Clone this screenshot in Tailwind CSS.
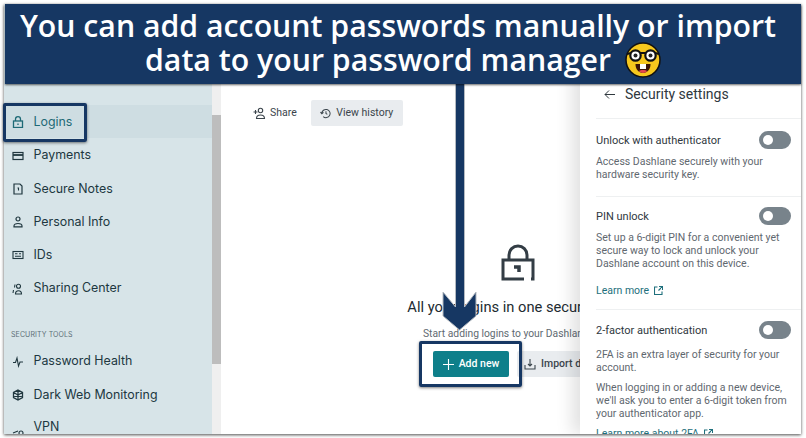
<!DOCTYPE html>
<html lang="en">
<head>
    <meta charset="UTF-8">
    <title>Dashlane add logins</title>
    <script src="https://cdn.jsdelivr.net/npm/@tailwindcss/browser@4"></script>
</head>
<body class="bg-white overflow-hidden">
<div class="relative w-[806px] h-[438px] overflow-hidden">
    <!-- App screenshot -->
    <div class="absolute left-[4px] top-[4px] w-[797px] h-[430px] flex overflow-hidden shadow-[0_1px_3px_rgba(0,0,0,0.7)] font-['Roboto',sans-serif]">
        <!-- Sidebar -->
        <div class="w-[208px] shrink-0 bg-[#d7e4e8] text-[#20373f] text-[12.400px] font-['Inter',sans-serif] pt-[101px]">
            <div class="h-[33.200px] mb-[1px] pt-[1px] flex items-center gap-[9.500px] pl-[8px] bg-[#cedde2] text-[#1e6a76]">
                <svg class="w-[12px] h-[12px]" viewBox="0 0 12 12" fill="none" stroke="currentColor" stroke-width="1.300"><rect x="1.500" y="5" width="9" height="6.500"/><path d="M3.500 5V3.200a2.500 2.500 0 0 1 5 0V5M6 7.500v1.500"/></svg>
                <span>Logins</span>
            </div>
            <div class="h-[33.200px] flex items-center gap-[9.500px] pl-[8px]">
                <svg class="w-[12px] h-[12px]" viewBox="0 0 12 12" fill="none" stroke="currentColor" stroke-width="1.200"><rect x="1" y="2.500" width="10" height="7"/><path d="M1 5h10" stroke-width="1.800"/></svg>
                <span>Payments</span>
            </div>
            <div class="h-[33.200px] flex items-center gap-[9.500px] pl-[8px]">
                <svg class="w-[12px] h-[12px]" viewBox="0 0 12 12" fill="none" stroke="currentColor" stroke-width="1.200"><path d="M2 1h6l2 2v8H2z"/><path d="M5.500 5h1v2.500" stroke-width="1.100"/></svg>
                <span>Secure Notes</span>
            </div>
            <div class="h-[33.200px] flex items-center gap-[9.500px] pl-[8px]">
                <svg class="w-[12px] h-[12px]" viewBox="0 0 12 12" fill="none" stroke="currentColor" stroke-width="1.200"><circle cx="6" cy="3" r="2"/><path d="M2 10.800V10c0-1.500 1.500-2.500 4-2.500s4 1 4 2.500v.8z"/></svg>
                <span>Personal Info</span>
            </div>
            <div class="h-[33.200px] flex items-center gap-[9.500px] pl-[8px]">
                <svg class="w-[12px] h-[12px]" viewBox="0 0 12 12" fill="none" stroke="currentColor" stroke-width="1.100"><rect x="1" y="2.500" width="10" height="7"/><path d="M3 4.800h2.500M3 7.200h6M7 4.800h2"/></svg>
                <span>IDs</span>
            </div>
            <div class="h-[33.200px] flex items-center gap-[9.500px] pl-[8px]">
                <svg class="w-[12px] h-[12px]" viewBox="0 0 12 12" fill="none" stroke="currentColor" stroke-width="1.100"><circle cx="6.500" cy="3.200" r="2"/><path d="M3.500 11c0-2 1-3.200 3-3.200s3 1.200 3 3.200zM3 1.500l-.5 3M1.500 7L1 10"/></svg>
                <span>Sharing Center</span>
            </div>
            <div class="mt-[20px] h-[20px] pl-[7px] flex items-center text-[7px] tracking-[0.1px] text-[#5c6f76]">SECURITY TOOLS</div>
            <div class="h-[33.200px] flex items-center gap-[9.500px] pl-[8px]">
                <svg class="w-[12px] h-[12px]" viewBox="0 0 12 12" fill="none" stroke="currentColor" stroke-width="1.100"><path d="M1 6.500h2.500L5 2l1.500 8L8 6h3"/></svg>
                <span>Password Health</span>
            </div>
            <div class="h-[33.200px] flex items-center gap-[9.500px] pl-[8px]">
                <svg class="w-[12px] h-[12px]" viewBox="0 0 12 12" fill="none" stroke="currentColor" stroke-width="1.300"><path d="M6 1l4.500 2.500v5L6 11 1.500 8.500v-5zM6 1v10M1.500 3.500l9 5M10.500 3.500l-9 5"/></svg>
                <span>Dark Web Monitoring</span>
            </div>
            <div class="h-[33.200px] flex items-center gap-[9.500px] pl-[8px]">
                <svg class="w-[12px] h-[12px] mt-[9px]" viewBox="0 0 12 12" fill="none" stroke="currentColor" stroke-width="1.100"><path d="M1 6l5-2M1 9l4-1.500"/><circle cx="9" cy="6" r="2"/></svg>
                <span class="-mt-[2px]">VPN</span>
            </div>
        </div>
        <!-- Scrollbar -->
        <div class="w-[9px] shrink-0 bg-[#efefef] pt-[111px]">
            <div class="h-[249px] bg-[#bdbdbd]"></div>
        </div>
        <!-- Main -->
        <div class="w-[594px] shrink-0 bg-white text-[#3b454c]">
            <div class="pt-[96px] pl-[32px] flex items-center gap-[14px] text-[10.500px]">
                <div class="flex items-center gap-[4px]">
                    <svg class="w-[13px] h-[13px]" viewBox="0 0 13 13" fill="none" stroke="currentColor" stroke-width="1.100"><circle cx="7.500" cy="3.500" r="2.200"/><path d="M3.500 11.500c0-2 1.500-3.500 4-3.500s4 1.500 4 3.500zM0.500 5h4M2.500 3v4"/></svg>
                    <span>Share</span>
                </div>
                <div class="h-[26px] w-[92px] rounded-[2px] bg-[#e9ecef] flex items-center justify-center gap-[5px]">
                    <svg class="w-[11px] h-[11px]" viewBox="0 0 12 12" fill="none" stroke="currentColor" stroke-width="1.100"><path d="M2 6a4.500 4.500 0 1 1 1.500 3.400M0.500 4.500L2 6.200l1.800-1.500M6.500 3.500V6l1.500 1"/></svg>
                    <span>View history</span>
                </div>
            </div>
            <div class="mt-[118px] flex flex-col items-center">
                <svg class="w-[36px] h-[37px]" viewBox="0 0 36 37" fill="none" stroke="#333d45" stroke-width="3"><path d="M9 16V11a9 9 0 0 1 18 0v5"/><path d="M24 35H3V16h30v19h-2"/><path d="M14 23h5v5" stroke-width="3.500"/></svg>
                <div class="mt-[16px] text-[14.700px] leading-[20px] text-[#222b31] whitespace-nowrap">All your logins in one secure place</div>
                <div class="mt-[9px] text-[10.300px] leading-[16px] text-[#616a71] whitespace-nowrap">Start adding logins to your Dashlane vault</div>
                <div class="mt-[9px] flex gap-[8px] text-[10.500px] font-medium">
                    <div class="w-[76px] h-[26px] rounded-[2px] bg-[#0e7f8a] text-white flex items-center justify-center gap-[5px]">
                        <svg class="w-[11px] h-[11px]" viewBox="0 0 11 11" fill="none" stroke="currentColor" stroke-width="1.100"><path d="M5.500 0v11M0 5.500h11"/></svg>
                        <span>Add new</span>
                    </div>
                    <div class="w-[86px] h-[26px] rounded-[2px] bg-[#e9ecef] flex items-center justify-center gap-[5px]">
                        <svg class="w-[12px] h-[12px]" viewBox="0 0 12 12" fill="none" stroke="currentColor" stroke-width="1.100"><path d="M1 7v4h10V7M6 1v7M4 6l2 2 2-2"/></svg>
                        <span>Import data</span>
                    </div>
                </div>
            </div>
        </div>
        <!-- Security settings drawer -->
        <div class="absolute right-0 top-0 bottom-0 w-[221px] bg-white shadow-[-8px_0_16px_rgba(0,0,0,0.12)] pt-[80px] text-[#5f686f] text-[10.500px] leading-[13px]">
            <div class="h-[35px] pb-[14px] ml-[16px] border-b border-[#eef0f1] flex items-center gap-[10px] text-[#2f383e] text-[14px]">
                <svg class="w-[11px] h-[11px] ml-[8px]" viewBox="0 0 11 11" fill="none" stroke="currentColor" stroke-width="1"><path d="M11 5.500H1M5 1.500l-4 4 4 4"/></svg>
                <span>Security settings</span>
            </div>
            <div class="h-[78px] ml-[16px] border-b border-[#eef0f1] pt-[12px] pr-[10px]">
                <div class="flex items-center justify-between h-[18px] text-[#2f383e] text-[11px]">
                    <span>Unlock with authenticator</span>
                    <div class="w-[32px] h-[18px] rounded-full bg-[#78838b] p-[4px]"><div class="w-[10px] h-[10px] rounded-full bg-white"></div></div>
                </div>
                <p class="mt-[6px]">Access Dashlane securely with your<br>hardware security key.</p>
            </div>
            <div class="h-[113px] ml-[16px] border-b border-[#eef0f1] pt-[10px] pr-[10px]">
                <div class="flex items-center justify-between h-[18px] text-[#2f383e] text-[11px]">
                    <span>PIN unlock</span>
                    <div class="w-[32px] h-[18px] rounded-full bg-[#78838b] p-[4px]"><div class="w-[10px] h-[10px] rounded-full bg-white"></div></div>
                </div>
                <p class="mt-[6px]">Set up a 6-digit PIN for a convenient yet<br>secure way to lock and unlock your<br>Dashlane account on this device.</p>
                <div class="mt-[14px] flex items-center gap-[5px] text-[#1e6f7c]">
                    <span>Learn more</span>
                    <svg class="w-[9px] h-[9px]" viewBox="0 0 9 9" fill="none" stroke="currentColor" stroke-width="1.100"><path d="M3.500 1H.5v7.500H8V5.500M5 .5h3.500V4M8.500.5L4.500 4.500"/></svg>
                </div>
            </div>
            <div class="ml-[16px] pt-[11px] pr-[10px]">
                <div class="flex items-center justify-between h-[18px] text-[#2f383e] text-[11px]">
                    <span>2-factor authentication</span>
                    <div class="w-[32px] h-[18px] rounded-full bg-[#78838b] p-[4px]"><div class="w-[10px] h-[10px] rounded-full bg-white"></div></div>
                </div>
                <p class="mt-[9px]">2FA is an extra layer of security for your<br>account.</p>
                <p class="mt-[7px]">When logging in or adding a new device,<br>we'll ask you to enter a 6-digit token from<br>your authenticator app.</p>
                <div class="mt-[7px] flex items-center gap-[5px] text-[#1e6f7c]">
                    <span class="underline">Learn more about 2FA</span>
                    <svg class="w-[9px] h-[9px]" viewBox="0 0 9 9" fill="none" stroke="currentColor" stroke-width="1.100"><path d="M3.500 1H.5v7.500H8V5.500M5 .5h3.500V4M8.500.5L4.500 4.500"/></svg>
                </div>
            </div>
        </div>
    </div>

    <!-- Highlight boxes -->
    <div class="absolute left-[3px] top-[103px] w-[84px] h-[39px] border-[3px] border-[#163763] rounded-[2px] shadow-[0_1px_3px_rgba(0,0,0,0.5)]"></div>
    <div class="absolute left-[419px] top-[341px] w-[103px] h-[46px] border-[3px] border-[#163763] rounded-[2px] shadow-[0_1px_3px_rgba(0,0,0,0.5)]"></div>

    <!-- Arrow -->
    <svg class="absolute left-[440px] top-[80px]" width="40" height="254" viewBox="0 0 40 254">
        <path d="M15.500 0H24.500V227L36 212V236L19.500 250 3 236V212L15.500 227Z" fill="#163763" stroke="#b4bac1" stroke-width="1"/>
    </svg>

    <!-- Banner -->
    <div class="absolute left-[5px] top-[4px] w-[796px] h-[80px] bg-[#163763] shadow-[0_1px_2px_rgba(0,0,0,0.6)] flex flex-col items-center justify-center text-white font-['Open_Sans',sans-serif] font-semibold text-[30.250px] leading-[32px] whitespace-nowrap">
        <div class="pr-[10px]">You can add account passwords manually or import</div>
        <div class="flex items-center gap-[14px]">
            <span>data to your password manager</span>
            <svg class="w-[36px] h-[36px]" viewBox="0 0 36 36">
                <circle cx="18" cy="18" r="17" fill="#f6c81e" stroke="#111" stroke-width="1.500"/>
                <path d="M2 12l4-1M34 12l-4-1M15 11h6" stroke="#111" stroke-width="2"/>
                <circle cx="10.500" cy="13.500" r="5.200" fill="#fff" stroke="#111" stroke-width="2.200"/>
                <circle cx="25.500" cy="13.500" r="5.200" fill="#fff" stroke="#111" stroke-width="2.200"/>
                <circle cx="10.500" cy="13.500" r="2" fill="#222"/>
                <circle cx="25.500" cy="13.500" r="2" fill="#222"/>
                <path d="M10.500 22h15c0 5.500-3.300 9-7.500 9s-7.500-3.500-7.500-9z" fill="#3a1408"/>
                <rect x="15" y="22" width="6" height="5" fill="#fff"/>
                <path d="M13.500 29c2-1.500 7-1.500 9 0-3 2.500-6 2.500-9 0z" fill="#e5484d"/>
            </svg>
        </div>
    </div>
</div>
</body>
</html>
